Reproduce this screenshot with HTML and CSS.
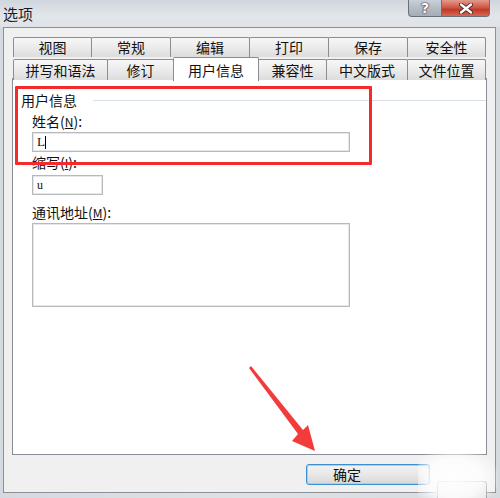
FILE: index.html
```html
<!DOCTYPE html>
<html lang="zh-CN">
<head>
<meta charset="utf-8">
<title>选项</title>
<link rel="stylesheet" href="styles.css">
</head>
<body>
<div class="window">
  <div class="titlebar">
    <div class="title">选项</div>
    <div class="caption-buttons">
      <div class="cap-btn help"><span>?</span></div>
      <div class="cap-btn close">
        <svg width="14" height="11" viewBox="0 0 14 11">
          <path d="M2 1.5 L12 9.5 M12 1.5 L2 9.5" stroke="#4a2a28" stroke-width="4.2" stroke-linecap="round"/>
          <path d="M2 1.5 L12 9.5 M12 1.5 L2 9.5" stroke="#fff" stroke-width="2.4" stroke-linecap="round"/>
        </svg>
      </div>
    </div>
  </div>
  <div class="frame">
    <div class="tabs">
      <div class="tab-row row1">
        <div class="tab">视图</div>
        <div class="tab">常规</div>
        <div class="tab">编辑</div>
        <div class="tab">打印</div>
        <div class="tab">保存</div>
        <div class="tab">安全性</div>
      </div>
      <div class="tab-row row2">
        <div class="tab">拼写和语法</div>
        <div class="tab">修订</div>
        <div class="tab selected">用户信息</div>
        <div class="tab">兼容性</div>
        <div class="tab">中文版式</div>
        <div class="tab">文件位置</div>
      </div>
    </div>
    <div class="panel">
      <div class="group-head">
        <span class="group-label">用户信息</span>
        <span class="group-line"></span>
      </div>
      <div class="fields">
        <div class="label name-label">姓名(<u>N</u>):</div>
        <div class="input wide"><span class="val">L</span><span class="caret"></span></div>
        <div class="label abbr-label">缩写(<u>I</u>):</div>
        <div class="input short"><span class="val small">u</span></div>
        <div class="label addr-label">通讯地址(<u>M</u>):</div>
        <div class="input area"></div>
      </div>
    </div>
    <div class="footer">
      <div class="btn ok">确定</div>
      <div class="btn cancel"></div>
    </div>
  </div>
  <div class="highlight"></div>
  <svg class="arrow" width="500" height="498" viewBox="0 0 500 498">
    <polygon points="251,366 303,430 308,425 315,451 292,441 298,434 249,368" fill="#f23c3c"/>
  </svg>
  <div class="watermark"></div>
</div>
</body>
</html>
```
FILE: styles.css
```css
html, body {
  margin: 0;
  padding: 0;
}
body {
  font-family: "Noto Sans CJK SC", "Liberation Sans", sans-serif;
  color: #111;
  background: #d9dee3;
}
.window {
  position: relative;
  width: 500px;
  height: 498px;
  overflow: hidden;
  background: linear-gradient(90deg, #d4dae0 0%, #dde2e6 50%, #d6dbe0 100%);
}
.titlebar {
  height: 27px;
  display: flex;
  align-items: flex-start;
  background: linear-gradient(180deg, #cfd6dd 0%, #e2e6ea 60%, #dfe3e7 100%);
}
.title {
  padding: 5px 0 0 3px;
  font-size: 15px;
  line-height: 17px;
  color: #1c1c28;
}
.caption-buttons {
  margin-left: auto;
  margin-right: 10px;
  display: flex;
}
.cap-btn {
  height: 17px;
  box-sizing: border-box;
  display: flex;
  align-items: center;
  justify-content: center;
  border: 1px solid #6a7079;
  border-top: none;
}
.help {
  width: 34px;
  border-radius: 0 0 0 4px;
  background: linear-gradient(180deg, #c9d0d8 0%, #b4bcc6 50%, #a4adb8 100%);
  font-family: "DejaVu Sans", sans-serif;
  font-weight: bold;
  font-size: 14px;
  color: #fff;
}
.help span {
  line-height: 15px;
  text-shadow: 0 0 1px #333, 0 0 1px #333, 0 0 2px #555;
}
.close {
  width: 48px;
  border-left: none;
  border-radius: 0 0 4px 0;
  background: linear-gradient(180deg, #e39a8c 0%, #d15a47 45%, #c2392a 60%, #d36a55 100%);
}
.frame {
  width: 493px;
  height: 466px;
  margin-left: 3px;
  box-sizing: border-box;
  border: 1px solid #8d8f92;
  background: #f0f0f0;
  padding: 9px 0 0 9px;
}
.tabs {
  width: 472px;
}
.tab-row {
  display: grid;
}
.row1 {
  grid-template-columns: 78px 79px 79px 79px 79px 78px;
  height: 20px;
}
.row2 {
  grid-template-columns: 94px 66px 85px 68px 81px 78px;
  height: 21px;
  align-items: end;
}
.tab {
  box-sizing: border-box;
  height: 100%;
  border: 1px solid #8a8d94;
  border-bottom: none;
  border-radius: 2px 2px 0 0;
  margin-right: -1px;
  background: linear-gradient(180deg, #f7f7f7 0%, #ebebeb 50%, #dcdcdc 100%);
  font-size: 14px;
  line-height: 19px;
  text-align: center;
  color: #111;
  white-space: nowrap;
}
.row2 .tab {
  height: 21px;
  line-height: 20px;
}
.row2 .tab.selected {
  position: relative;
  z-index: 2;
  height: 24px;
  margin-bottom: -1px;
  background: #fff;
  line-height: 24px;
}
.panel {
  width: 475px;
  height: 377px;
  margin-left: -1px;
  box-sizing: border-box;
  border: 1px solid #898c94;
  background: #fff;
  padding: 12px 0 0 8px;
}
.group-head {
  display: flex;
  align-items: center;
  height: 18px;
}
.group-label {
  font-size: 14px;
  line-height: 18px;
}
.group-line {
  flex: 1;
  height: 1px;
  margin-left: 16px;
  background: #d5dfe5;
}
.fields {
  padding-left: 11px;
}
.label {
  font-size: 14px;
  line-height: 17px;
  color: #111;
}
.label u {
  font-size: 12px;
}
.name-label { margin-top: 4px; }
.abbr-label { margin-top: 2px; }
.addr-label { margin-top: 9px; }
.input {
  box-sizing: border-box;
  height: 20px;
  border: 1px solid #b8b9bd;
  box-shadow: inset 0 0 0 1px #e6e7ea;
  background: #fff;
  display: flex;
  align-items: center;
  padding-left: 4px;
}
.wide {
  width: 318px;
  margin-top: 2px;
}
.short {
  width: 71px;
  margin-top: 4px;
}
.area {
  width: 318px;
  height: 84px;
  margin-top: 2px;
}
.val {
  font-family: "Liberation Serif", serif;
  font-size: 13px;
  line-height: 14px;
}
.val.small {
  font-size: 12px;
}
.caret {
  width: 1px;
  height: 13px;
  background: #000;
}
.footer {
  display: flex;
  align-items: flex-start;
  padding-top: 9px;
}
.btn {
  box-sizing: border-box;
  height: 21px;
  border-radius: 3px;
}
.ok {
  width: 124px;
  margin-left: 293px;
  border: 1px solid #3c8fd0;
  box-shadow: inset 0 0 0 1px #9fd2f3;
  background: linear-gradient(180deg, #f3f3f3 0%, #e8e8e8 50%, #d7d7d7 100%);
  font-size: 14px;
  line-height: 19px;
  padding-left: 26px;
  color: #111;
}
.cancel {
  width: 50px;
  margin-left: 7px;
  margin-top: 17px;
  border: 1px solid #8d8f92;
  border-bottom: none;
  background: #e6e6e6;
}
.highlight {
  position: absolute;
  left: 15px;
  top: 86px;
  width: 357px;
  height: 79px;
  box-sizing: border-box;
  border: 3px solid #f52a2a;
  border-radius: 1px;
}
.arrow {
  position: absolute;
  left: 0;
  top: 0;
  pointer-events: none;
}
.watermark {
  position: absolute;
  left: 418px;
  top: 448px;
  width: 80px;
  height: 55px;
  background: radial-gradient(ellipse at 45% 55%, rgba(255,255,255,0.95) 0%, rgba(255,255,255,0.8) 45%, rgba(255,255,255,0) 75%);
}
```
